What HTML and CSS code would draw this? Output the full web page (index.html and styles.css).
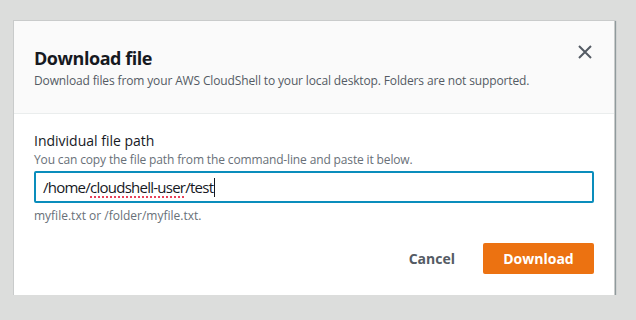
FILE: index.html
```html
<!DOCTYPE html>
<html lang="en">
<head>
    <meta charset="UTF-8">
    <title>Download file</title>
    <link rel="stylesheet" href="styles.css">
</head>
<body>
    <div class="modal">
        <div class="modal-header">
            <div class="header-text">
                <h2>Download file</h2>
                <p class="description">Download files from your AWS CloudShell to your local desktop. Folders are not supported.</p>
            </div>
            <button class="close-btn" aria-label="Close">
                <svg width="16" height="16" viewBox="0 0 16 16">
                    <path d="M2 2 L14 14 M14 2 L2 14" stroke="#545b64" stroke-width="2" fill="none"/>
                </svg>
            </button>
        </div>
        <div class="modal-body">
            <label class="field-label">Individual file path</label>
            <div class="field-hint">You can copy the file path from the command-line and paste it below.</div>
            <div class="text-input">/home/<span class="misspelled">cloudshell-user</span>/test<span class="caret"></span></div>
            <div class="field-constraint">myfile.txt or /folder/myfile.txt.</div>
            <div class="modal-footer">
                <button class="btn-link">Cancel</button>
                <button class="btn-primary">Download</button>
            </div>
        </div>
    </div>
</body>
</html>
```

FILE: styles.css
```css
body {
    font-family: 'Open Sans', 'Noto Sans', sans-serif;
    margin: 0;
    padding: 21px 0 0 14px;
    background-color: #dcdddc;
    color: #16191f;
}
.modal {
    width: 600px;
    background: white;
    box-shadow: 0 0 0 1px #c9cbcb, 1px 1px 1px 1px rgba(0, 28, 36, 0.35);
}
.modal-header {
    display: flex;
    justify-content: space-between;
    background-color: #fafafa;
    padding: 26px 20px 24px;
    border-bottom: 1px solid #eaeded;
}
.modal-header h2 {
    margin: 0;
    font-size: 18px;
    line-height: 22px;
    font-weight: 700;
    letter-spacing: -0.45px;
}
.description {
    margin: 4px 0 0;
    font-size: 12px;
    line-height: 16px;
    color: #545b64;
    letter-spacing: -0.14px;
}
.close-btn {
    background: none;
    border: none;
    padding: 0;
    margin: -3px 1px 0 0;
    width: 16px;
    height: 16px;
    cursor: pointer;
}
.modal-body {
    padding: 16px 20px 21px;
}
.field-label {
    display: block;
    font-size: 14px;
    line-height: 22px;
}
.field-hint {
    font-size: 12px;
    line-height: 16px;
    color: #687078;
    letter-spacing: -0.14px;
}
.text-input {
    margin-top: 3px;
    height: 32px;
    box-sizing: border-box;
    border: 2px solid #0a8dbc;
    border-radius: 2px;
    padding: 0 7px;
    font-size: 15px;
    line-height: 28px;
    letter-spacing: -0.75px;
    color: #16191f;
}
.misspelled {
    text-decoration: underline dotted #e8415a;
    text-decoration-thickness: 2px;
    text-underline-offset: 3px;
}
.caret {
    display: inline-block;
    width: 1px;
    height: 19px;
    margin-left: 1px;
    background: #16191f;
    vertical-align: -4px;
}
.field-constraint {
    margin-top: 5px;
    font-size: 12px;
    line-height: 16px;
    color: #687078;
}
.modal-footer {
    display: flex;
    justify-content: flex-end;
    align-items: center;
    gap: 8px;
    margin-top: 19px;
}
button {
    font-family: inherit;
    font-size: 14px;
    font-weight: 700;
    cursor: pointer;
}
.btn-link {
    background: none;
    border: none;
    color: #545b64;
    padding: 4px 20px;
}
.btn-primary {
    width: 111px;
    height: 31px;
    background-color: #ec7211;
    color: white;
    border: none;
    border-radius: 2px;
}
```
